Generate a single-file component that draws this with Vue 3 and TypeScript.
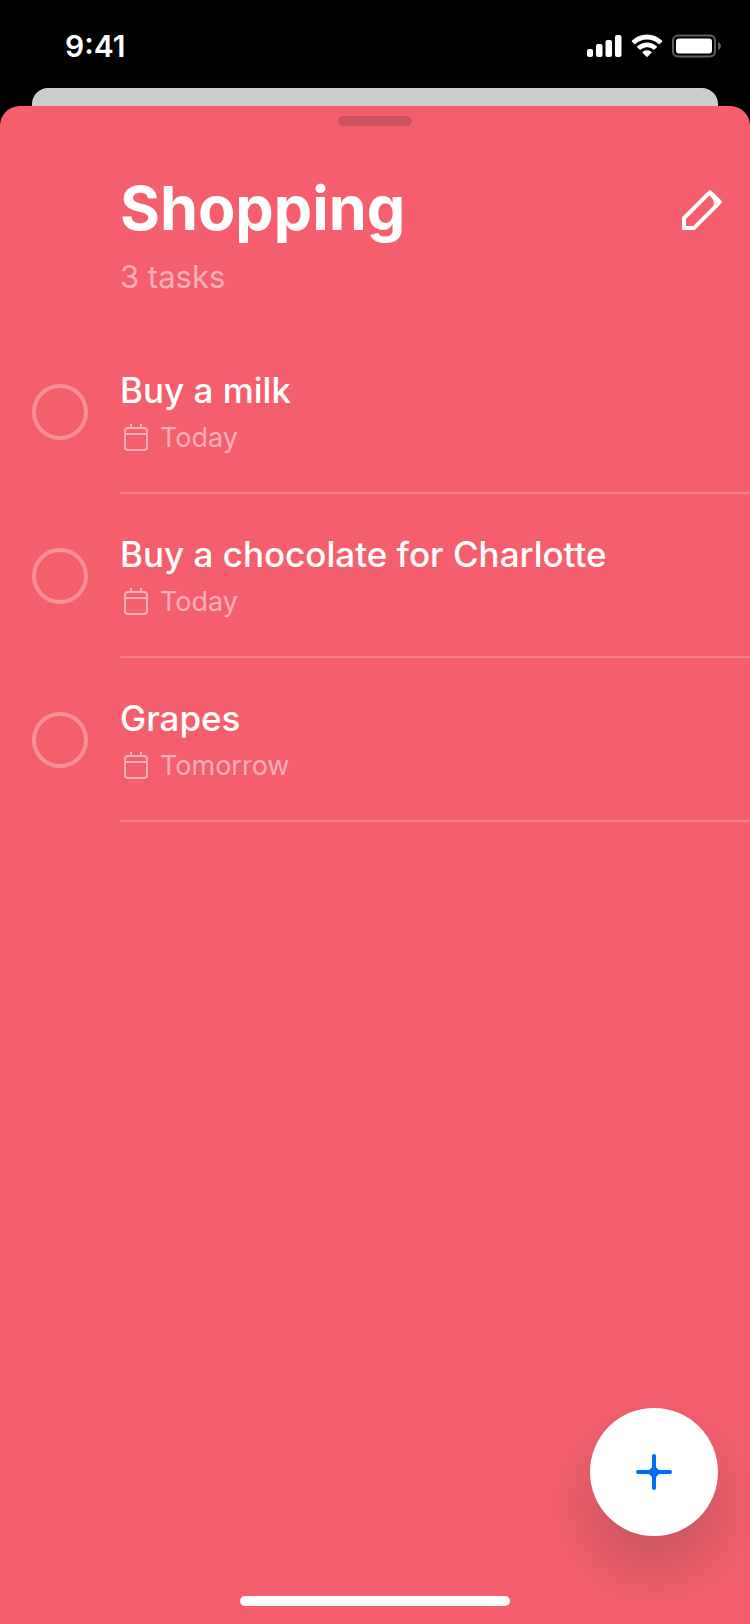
<script setup lang="ts">
import { computed, ref } from 'vue'

interface Task {
  id: number
  title: string
  due: string
  done: boolean
}

const tasks = ref<Task[]>([
  { id: 1, title: 'Buy a milk', due: 'Today', done: false },
  { id: 2, title: 'Buy a chocolate for Charlotte', due: 'Today', done: false },
  { id: 3, title: 'Grapes', due: 'Tomorrow', done: false },
])

const openCount = computed(() => tasks.value.filter((task) => !task.done).length)
</script>

<template>
  <div class="screen">
    <header class="status">
      <time class="clock">9:41</time>
      <div class="indicators">
        <svg class="signal" width="36" height="24" viewBox="0 0 36 24" aria-hidden="true">
          <rect x="1" y="15" width="6" height="8" rx="2" />
          <rect x="10" y="10" width="6.500" height="13" rx="2" />
          <rect x="19.500" y="6" width="6.500" height="17" rx="2" />
          <rect x="29" y="1" width="6.500" height="22" rx="2" />
        </svg>
        <svg class="wifi" width="32" height="24" viewBox="0 0 32 24" aria-hidden="true">
          <path d="M16 .6c5.700 0 11 2.300 15 6 .4.4.4.8 0 1.200l-2.200 2.200c-.4.4-.8.400-1.200 0A17 17 0 0 0 16 5.400 17 17 0 0 0 4.400 10c-.4.400-.8.400-1.200 0L1 7.800c-.4-.4-.4-.8 0-1.200 4-3.700 9.300-6 15-6Z" />
          <path d="M16 8.400c3.700 0 7.100 1.500 9.700 3.800.4.400.4.800 0 1.200l-2.300 2.200c-.3.400-.7.400-1.100 0A9.300 9.300 0 0 0 16 13.200c-2.400 0-4.600.9-6.300 2.400-.4.400-.8.400-1.100 0l-2.300-2.200c-.4-.4-.4-.8 0-1.200A14.500 14.500 0 0 1 16 8.400Z" />
          <path d="M16 16.200c1.700 0 3.200.6 4.400 1.600.3.300.3.700 0 1l-3.900 4c-.3.300-.7.300-1 0l-3.900-4c-.3-.3-.3-.7 0-1 1.200-1 2.700-1.600 4.400-1.600Z" />
        </svg>
        <svg class="battery" width="50" height="24" viewBox="0 0 50 24" aria-hidden="true">
          <rect x="1" y="1.500" width="42" height="21" rx="5" fill="none" stroke="#606060" stroke-width="2" />
          <rect x="4" y="4.500" width="36" height="15" rx="3" />
          <path d="M46 8c4 1.400 4 6.600 0 8Z" fill="#606060" />
        </svg>
      </div>
    </header>

    <div class="previous-card"></div>

    <main class="sheet">
      <div class="grabber"></div>

      <div class="heading">
        <div class="heading-text">
          <h1>Shopping</h1>
          <p class="count">{{ openCount }} tasks</p>
        </div>
        <button class="edit" type="button" aria-label="Edit list">
          <svg width="40" height="40" viewBox="0 0 40 40" aria-hidden="true">
            <path
              fill-rule="evenodd"
              d="M26.800.6q1.200-1.200 2.400 0L39.500 10.800q1.200 1.200 0 2.400L12.700 40H0V27.300ZM27.500 5.500 4 29V36H11.300L31 16.300C33 12.500 31.500 9 27.500 5.500Z"
            />
          </svg>
        </button>
      </div>

      <ul class="tasks">
        <li v-for="task in tasks" :key="task.id" class="task">
          <input :id="`task-${task.id}`" v-model="task.done" class="check" type="checkbox" />
          <div class="body">
            <label class="title" :for="`task-${task.id}`">{{ task.title }}</label>
            <div class="due">
              <svg width="24" height="28" viewBox="0 0 24 28" aria-hidden="true">
                <rect x="1" y="4" width="22" height="22" rx="3" />
                <path d="M1 10H23M7 4V0M17 4V0" />
              </svg>
              <span>{{ task.due }}</span>
            </div>
          </div>
        </li>
      </ul>

      <button class="add" type="button" aria-label="Add task">
        <svg width="36" height="36" viewBox="0 0 36 36" aria-hidden="true">
          <path d="M18 2V34M2 18H34" stroke="#006cff" stroke-width="4" stroke-linecap="round" />
          <path d="M16 12Q16 14 14.500 14.500 14 16 12 16V20Q14 20 14.500 21.500 16 22 16 24H20Q20 22 21.500 21.500 22 20 24 20V16Q22 16 21.500 14.500 20 14 20 12Z" fill="#006cff" />
        </svg>
      </button>

      <div class="home-bar"></div>
    </main>
  </div>
</template>

<style>
body {
  margin: 0;
  background: #000;
}
</style>

<style scoped>
.screen {
  display: flex;
  flex-direction: column;
  min-height: 100vh;
  background: #000;
  color: #fff;
  font-family: Inter, "Liberation Sans", sans-serif;
}

.status {
  display: flex;
  align-items: center;
  justify-content: space-between;
  box-sizing: border-box;
  height: 88px;
  padding: 4px 28px 0 65px;
}

.clock {
  font-size: 30px;
  line-height: 36px;
  font-weight: 600;
}

.indicators {
  display: flex;
  gap: 9px;
}

.indicators svg {
  display: block;
  fill: #fff;
}

.previous-card {
  height: 18px;
  margin: 0 32px;
  border-radius: 16px 16px 0 0;
  background: #ccc;
}

.sheet {
  position: relative;
  display: flex;
  flex: 1;
  flex-direction: column;
  border-radius: 20px 20px 0 0;
  background: #f55f6d;
  overflow: hidden;
}

.grabber {
  align-self: center;
  width: 74px;
  height: 10px;
  margin-top: 10px;
  border-radius: 5px;
  background: #cb5361;
}

.heading {
  display: flex;
  align-items: flex-start;
  justify-content: space-between;
  padding: 44px 28px 34px 120px;
}

h1 {
  margin: 0;
  font-size: 61px;
  line-height: 76px;
  font-weight: 700;
}

.count {
  margin: 12px 0 0;
  font-size: 31px;
  line-height: 38px;
  font-weight: 400;
  color: #fbafb7;
}

button {
  border: 0;
  padding: 0;
  font: inherit;
  cursor: pointer;
}

.edit {
  margin-top: 20px;
  background: none;
}

.edit svg {
  display: block;
  fill: #fff;
}

.tasks {
  margin: 0;
  padding: 0;
  list-style: none;
}

.task {
  display: flex;
  align-items: center;
  gap: 32px;
  padding-left: 32px;
}

.check {
  appearance: none;
  flex: none;
  width: 56px;
  height: 56px;
  margin: 0;
  border: 4px solid #f98f9a;
  border-radius: 50%;
}

.check:checked {
  background: #f98f9a;
}

.body {
  flex: 1;
  padding: 38px 32px 34px 0;
  border-bottom: 2px solid #f87f8b;
}

.title {
  display: block;
  font-size: 35px;
  line-height: 44px;
  font-weight: 500;
}

.due {
  display: flex;
  align-items: center;
  gap: 12px;
  margin-top: 6px;
  padding-left: 4px;
  font-size: 27px;
  line-height: 40px;
  color: #fbafb7;
}

.due svg {
  fill: none;
  stroke: #fbafb7;
  stroke-width: 2;
}

.add {
  position: absolute;
  right: 32px;
  bottom: 88px;
  display: grid;
  place-items: center;
  width: 128px;
  height: 128px;
  border-radius: 50%;
  background: #fff;
  box-shadow: 0 32px 64px rgba(61, 61, 61, 0.28);
}

.home-bar {
  align-self: center;
  width: 36%;
  height: 10px;
  margin: auto 0 18px;
  border-radius: 5px;
  background: #fff;
}
</style>
